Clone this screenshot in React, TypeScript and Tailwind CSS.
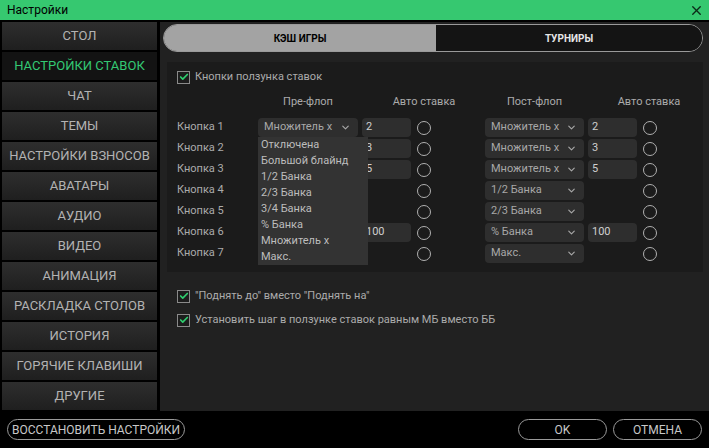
import { Check, ChevronDown, X } from "lucide-react"

const menu = [
  "СТОЛ",
  "НАСТРОЙКИ СТАВОК",
  "ЧАТ",
  "ТЕМЫ",
  "НАСТРОЙКИ ВЗНОСОВ",
  "АВАТАРЫ",
  "АУДИО",
  "ВИДЕО",
  "АНИМАЦИЯ",
  "РАСКЛАДКА СТОЛОВ",
  "ИСТОРИЯ",
  "ГОРЯЧИЕ КЛАВИШИ",
  "ДРУГИЕ",
]

const rows = [
  { pre: "Множитель х", preVal: "2", post: "Множитель х", postVal: "2" },
  { pre: "", preVal: "3", post: "Множитель х", postVal: "3" },
  { pre: "", preVal: "5", post: "Множитель х", postVal: "5" },
  { pre: "", preVal: "", post: "1/2 Банка", postVal: "" },
  { pre: "", preVal: "", post: "2/3 Банка", postVal: "" },
  { pre: "", preVal: "100", post: "% Банка", postVal: "100" },
  { pre: "", preVal: "", post: "Макс.", postVal: "" },
]

const options = [
  "Отключена",
  "Большой блайнд",
  "1/2 Банка",
  "2/3 Банка",
  "3/4 Банка",
  "% Банка",
  "Множитель х",
  "Макс.",
]

function Checkbox({ label }: { label: string }) {
  return (
    <div className="flex items-center gap-[5px] h-[14px]">
      <div className="w-[13px] h-[13px] border border-[#8a8a8a] bg-[#1c1c1c] flex items-center justify-center">
        <Check size={10} strokeWidth={4} className="text-[#2fcf6f]" />
      </div>
      <span className="text-[11px] text-[#ababab]">{label}</span>
    </div>
  )
}

function Select({ value, w }: { value: string; w: string }) {
  return (
    <div className={`${w} h-[19px] bg-[#2e2e2e] rounded-[4px] flex items-center justify-between pl-[6px] pr-[7px]`}>
      <span className="text-[11px] text-[#a8a8a8]">{value}</span>
      <ChevronDown size={11} strokeWidth={2.5} className="text-[#a8a8a8]" />
    </div>
  )
}

function Input({ value }: { value: string }) {
  if (!value) return <div className="w-[49px] h-[19px]" />
  return (
    <div className="w-[49px] h-[19px] bg-[#2e2e2e] rounded-[4px] flex items-center pl-[4px]">
      <span className="text-[11px] text-[#cfcfcf]">{value}</span>
    </div>
  )
}

function Radio() {
  return <div className="w-[14px] h-[14px] rounded-full border border-[#b0b0b0]" />
}

export default function App() {
  return (
    <div
      className="w-[709px] h-[448px] bg-black flex flex-col overflow-hidden"
      style={{ fontFamily: "Roboto, 'Liberation Sans', sans-serif" }}
    >
      <div className="h-[20px] bg-[#36c870] flex items-center justify-between pl-[7px] pr-[5px]">
        <span className="text-[12px] text-black">Настройки</span>
        <X size={15} strokeWidth={2.2} className="text-[#0c2a18]" />
      </div>

      <div className="flex h-[391px] pt-[2px]">
        <div className="w-[158px] flex flex-col gap-[2px] pl-[2px] pr-[1px]">
          {menu.map((m, i) =>
            i === 1 ? (
              <div key={m} className="h-[28px] bg-[#131313] flex items-center justify-center text-[13px] text-[#33c974]">
                {m}
              </div>
            ) : (
              <div
                key={m}
                className="h-[28px] bg-gradient-to-b from-[#2e2e2e] to-[#1f1f1f] flex items-center justify-center text-[13px] text-[#b3b3b3]"
              >
                {m}
              </div>
            )
          )}
        </div>

        <div className="flex-1 ml-[2px] bg-[#212121] flex flex-col pl-[3px] pr-[6px] pt-[2px]">
          <div className="h-[28px] flex rounded-full overflow-hidden border border-[#9a9a9a]">
            <div className="w-[272px] bg-[#a3a3a3] flex items-center justify-center text-[10px] font-bold text-black">
              КЭШ ИГРЫ
            </div>
            <div className="flex-1 bg-[#141414] flex items-center justify-center text-[10px] font-bold text-[#e6e6e6]">
              ТУРНИРЫ
            </div>
          </div>

          <div className="mt-[10px] ml-[4px] h-[210px] bg-[#1b1b1b] pl-[10px] pt-[8px]">
            <Checkbox label="Кнопки ползунка ставок" />

            <div className="flex mt-[11px] h-[14px] items-center text-[11px] text-[#ababab]">
              <div className="w-[81px]" />
              <div className="w-[100px] text-center">Пре-флоп</div>
              <div className="w-[26px]" />
              <div className="w-[80px] text-center">Авто ставка</div>
              <div className="w-[21px]" />
              <div className="w-[99px] text-center">Пост-флоп</div>
              <div className="w-[20px]" />
              <div className="w-[90px] text-center">Авто ставка</div>
            </div>

            <div className="relative mt-[8px]">
              {rows.map((r, i) => (
                <div key={i} className="flex items-center h-[21px]">
                  <div className="w-[81px] text-[11px] text-[#ababab]">Кнопка {i + 1}</div>
                  {r.pre ? <Select value={r.pre} w="w-[100px]" /> : <div className="w-[100px]" />}
                  <div className="w-[4px]" />
                  <Input value={r.preVal} />
                  <div className="w-[6px]" />
                  <Radio />
                  <div className="w-[54px]" />
                  <Select value={r.post} w="w-[99px]" />
                  <div className="w-[4px]" />
                  <Input value={r.postVal} />
                  <div className="w-[6px]" />
                  <Radio />
                </div>
              ))}

              <div className="absolute left-[81px] top-[20px] w-[110px] bg-[#333333] flex flex-col">
                {options.map((o) => (
                  <div key={o} className="h-[16px] flex items-center pl-[3px] text-[11px] text-[#bdbdbd]">
                    {o}
                  </div>
                ))}
              </div>
            </div>
          </div>

          <div className="ml-[14px] mt-[17px] flex flex-col gap-[10px]">
            <Checkbox label={'"Поднять до" вместо "Поднять на"'} />
            <Checkbox label="Установить шаг в ползунке ставок равным МБ вместо ББ" />
          </div>
        </div>
      </div>

      <div className="flex-1 flex items-center justify-between px-[7px]">
        <div className="h-[21px] px-[4px] rounded-full border border-[#9a9a9a] flex items-center text-[12px] text-[#c8c8c8]">
          ВОССТАНОВИТЬ НАСТРОЙКИ
        </div>
        <div className="flex gap-[6px]">
          <div className="w-[89px] h-[21px] rounded-full border border-[#9a9a9a] flex items-center justify-center text-[12px] text-[#c8c8c8]">
            OK
          </div>
          <div className="w-[89px] h-[21px] rounded-full border border-[#9a9a9a] flex items-center justify-center text-[12px] text-[#c8c8c8]">
            ОТМЕНА
          </div>
        </div>
      </div>
    </div>
  )
}
